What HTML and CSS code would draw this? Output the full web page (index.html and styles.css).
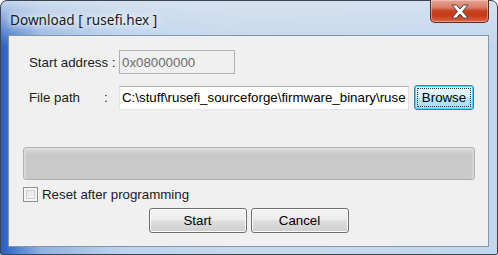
FILE: index.html
```html
<!DOCTYPE html>
<html>
<head>
<meta name="viewport" content="width=device-width, initial-scale=1">
<link rel="stylesheet" href="styles.css">
</head>
<body>

<div class="window">
  <div class="titlebar">
    <span class="title">Download [ rusefi.hex ]</span>
    <button type="button" class="closebtn" title="Close">
      <svg width="18" height="15" viewBox="0 0 18 15">
        <path d="M1 1 H5.5 L9 5 L12.5 1 H17 L11.5 7.5 L17 14 H12.5 L9 10 L5.5 14 H1 L6.5 7.5 Z"
              fill="#ffffff" stroke="#4a4a4a" stroke-width="1" stroke-linejoin="round"/>
      </svg>
    </button>
  </div>

  <div class="client">
    <div class="row row-address">
      <label class="label" for="addr">Start address :</label>
      <input type="text" id="addr" class="field field-disabled" value="0x08000000" readonly>
    </div>

    <div class="row row-path">
      <label class="label" for="path">File path<span class="colon">:</span></label>
      <input type="text" id="path" class="field field-path" value="C:\stuff\rusefi_sourceforge\firmware_binary\rusefi.hex">
      <button type="button" class="btn btn-focus"><span class="focusrect">Browse</span></button>
    </div>

    <div class="progress"></div>

    <label class="check">
      <span class="checkbox"></span> Reset after programming
    </label>

    <div class="actions">
      <button type="button" class="btn btn-action">Start</button>
      <button type="button" class="btn btn-action">Cancel</button>
    </div>
  </div>
</div>

</body>
</html>
```

FILE: styles.css
```css
body {
  margin: 0;
  font-family: "Liberation Sans", Arial, sans-serif;
  font-size: 13.3px;
  color: #000;
  background: #fff;
}

.window {
  width: 498px;
  height: 255px;
  box-sizing: border-box;
  border: 1px solid #3a4452;
  border-radius: 7px 7px 2px 2px;
  padding: 0 8px 7px 7px;
  display: flex;
  flex-direction: column;
  background:
    linear-gradient(180deg, rgba(214,226,240,0.9) 0, rgba(200,218,238,0) 45px),
    linear-gradient(90deg, #2a5fc0 0, #3a70cc 8px, #8fb2e0 40px, #bcd3ee 120px, #c8d9ec 250px, #c2d7ee 100%);
}

.titlebar {
  height: 34px;
  display: flex;
  align-items: flex-start;
  justify-content: space-between;
}

.title {
  font-family: "Noto Sans", "Open Sans", sans-serif;
  font-size: 13.6px;
  color: #1b1b1b;
  padding: 9px 0 0 2px;
  text-shadow: 0 0 6px #fff, 0 0 8px #fff;
}

.closebtn {
  width: 59px;
  height: 23px;
  margin-top: -1px;
  padding: 0;
  border: 1px solid #5b2b21;
  border-top: none;
  border-radius: 0 0 5px 5px;
  background: linear-gradient(180deg, #e7a594 0, #d97b64 35%, #c6411f 50%, #c63a17 70%, #d8684a 100%);
  box-shadow: inset 0 0 0 1px rgba(255,220,210,0.45);
  display: flex;
  align-items: center;
  justify-content: center;
}

.client {
  flex: 1;
  border: 1px solid #8496ab;
  background: #f0f0f0;
  padding: 14px 0 0 14px;
  box-sizing: border-box;
}

.row {
  display: flex;
  align-items: center;
  height: 24px;
}

.row-path {
  margin-top: 11px;
  height: 25px;
}

.label {
  width: 96px;
  box-sizing: border-box;
  padding-left: 6px;
  color: #202020;
  display: flex;
}

.colon {
  margin-left: 24px;
}

.field {
  font-family: "Liberation Sans", Arial, sans-serif;
  font-size: 13.3px;
  height: 24px;
  box-sizing: border-box;
  border: 1px solid #abadb3;
  border-color: #abadb3 #dbdfe6 #e3e9ef #e2e3ea;
  padding: 0 2px;
  margin: 0;
}

.field-disabled {
  width: 116px;
  background: #f0f0f0;
  color: #6d6d6d;
  border-color: #adb2b5;
}

.field-path {
  width: 290px;
  background: #fff;
  color: #000;
}

.btn {
  font-family: "Liberation Sans", Arial, sans-serif;
  font-size: 13.3px;
  color: #000;
  height: 25px;
  box-sizing: border-box;
  border: 1px solid #707070;
  border-radius: 3px;
  background: linear-gradient(180deg, #f2f2f2 0, #ebebeb 48%, #dddddd 52%, #cfcfcf 100%);
  box-shadow: inset 0 0 0 1px #fcfcfc;
  padding: 0;
}

.btn-focus {
  width: 60px;
  margin-left: 5px;
  border-color: #3c7fb1;
  background: linear-gradient(180deg, #eaf6fd 0, #d9f0fc 48%, #bee6fd 52%, #a7d9f5 100%);
  box-shadow: inset 0 0 0 1px #48d6f6;
  padding: 2px;
}

.focusrect {
  display: block;
  height: 100%;
  box-sizing: border-box;
  border: 1px dotted #333;
  line-height: 17px;
}

.progress {
  width: 452px;
  height: 33px;
  margin-top: 37px;
  box-sizing: border-box;
  border: 1px solid #b2b2b2;
  border-radius: 3px;
  background: linear-gradient(180deg, #e4e4e4 0, #d3d3d3 3px, #c9c9c9 6px, #c9c9c9 100%);
  box-shadow: inset 1px 0 0 #dadada, inset -1px 0 0 #dadada, inset 3px 0 3px -2px #e0e0e0, inset -3px 0 3px -2px #e0e0e0;
}

.check {
  display: flex;
  align-items: center;
  margin-top: 7px;
  height: 15px;
  color: #202020;
}

.checkbox {
  width: 15px;
  height: 15px;
  box-sizing: border-box;
  border: 1px solid #8e8f8f;
  background: linear-gradient(135deg, #dcdcdc 0, #f4f4f4 70%, #fdfdfd 100%);
  box-shadow: inset 0 0 0 2px #f4f4f4, inset 0 0 0 3px #cfd1d3;
  margin-right: 4px;
}

.actions {
  display: flex;
  justify-content: center;
  gap: 4px;
  margin-top: 6px;
  padding-right: 14px;
}

.btn-action {
  width: 98px;
}
```
